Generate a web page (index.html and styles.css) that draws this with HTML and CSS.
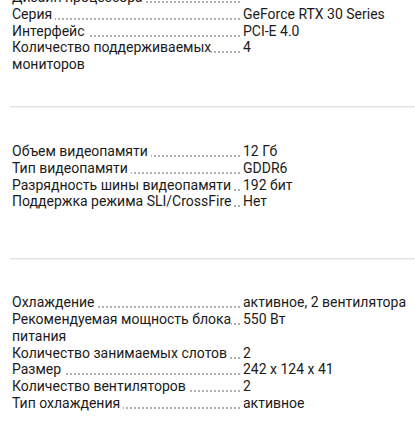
FILE: index.html
```html
<!DOCTYPE html>
<html lang="ru">
<head>
<meta charset="utf-8">
<link rel="stylesheet" href="styles.css">
</head>
<body>
<div class="page">
  <section class="group group-first">
    <div class="row"><div class="label"><span class="text">Дизайн процессора</span></div><div class="value">&nbsp;</div></div>
    <div class="row"><div class="label"><span class="text">Серия</span></div><div class="value">GeForce RTX 30 Series</div></div>
    <div class="row"><div class="label"><span class="text">Интерфейс</span></div><div class="value">PCI-E 4.0</div></div>
    <div class="row"><div class="label"><span class="text">Количество поддерживаемых мониторов</span></div><div class="value">4</div></div>
  </section>
  <hr class="sep">
  <section class="group group-mid">
    <div class="row"><div class="label"><span class="text">Объем видеопамяти</span></div><div class="value">12 Гб</div></div>
    <div class="row"><div class="label"><span class="text">Тип видеопамяти</span></div><div class="value">GDDR6</div></div>
    <div class="row"><div class="label"><span class="text">Разрядность шины видеопамяти</span></div><div class="value">192 бит</div></div>
    <div class="row"><div class="label"><span class="text">Поддержка режима SLI/CrossFire</span></div><div class="value">Нет</div></div>
  </section>
  <hr class="sep">
  <section class="group group-last">
    <div class="row"><div class="label"><span class="text">Охлаждение</span></div><div class="value">активное, 2 вентилятора</div></div>
    <div class="row"><div class="label"><span class="text">Рекомендуемая мощность блока питания</span></div><div class="value">550 Вт</div></div>
    <div class="row"><div class="label"><span class="text">Количество занимаемых слотов</span></div><div class="value">2</div></div>
    <div class="row"><div class="label"><span class="text">Размер</span></div><div class="value">242 x 124 x 41</div></div>
    <div class="row"><div class="label"><span class="text">Количество вентиляторов</span></div><div class="value">2</div></div>
    <div class="row"><div class="label"><span class="text">Тип охлаждения</span></div><div class="value">активное</div></div>
  </section>
</div>
</body>
</html>
```

FILE: styles.css
```css
html, body {
  margin: 0;
  padding: 0;
  background: #ffffff;
}
body {
  font-family: Roboto, "Noto Sans", sans-serif;
  font-size: 14px;
  line-height: 16.8px;
  color: #1b1b1b;
  overflow: hidden;
}
.page {
  margin-top: -11px;
}
.group {
  padding: 0 5px 0 12px;
}
.group-first {
  padding-bottom: 33px;
}
.group-mid {
  padding-top: 35px;
  padding-bottom: 48px;
}
.group-last {
  padding-top: 34px;
}
.sep {
  margin: 0 0 0 10px;
  height: 1px;
  border: 0;
  border-top: 1px solid #e4e4e4;
  background: #f3f3f3;
}
.row {
  display: flex;
  align-items: flex-start;
}
.label {
  flex: 0 0 228px;
  background-image: radial-gradient(circle, #b0b0b0 0.8px, transparent 1.2px);
  background-size: 4px 2px;
  background-repeat: repeat-x;
  background-position: left 1px top 12px;
}
.text {
  background: #ffffff;
  padding-right: 3px;
}
.value {
  flex: 1 1 auto;
  padding-left: 3px;
}
```
